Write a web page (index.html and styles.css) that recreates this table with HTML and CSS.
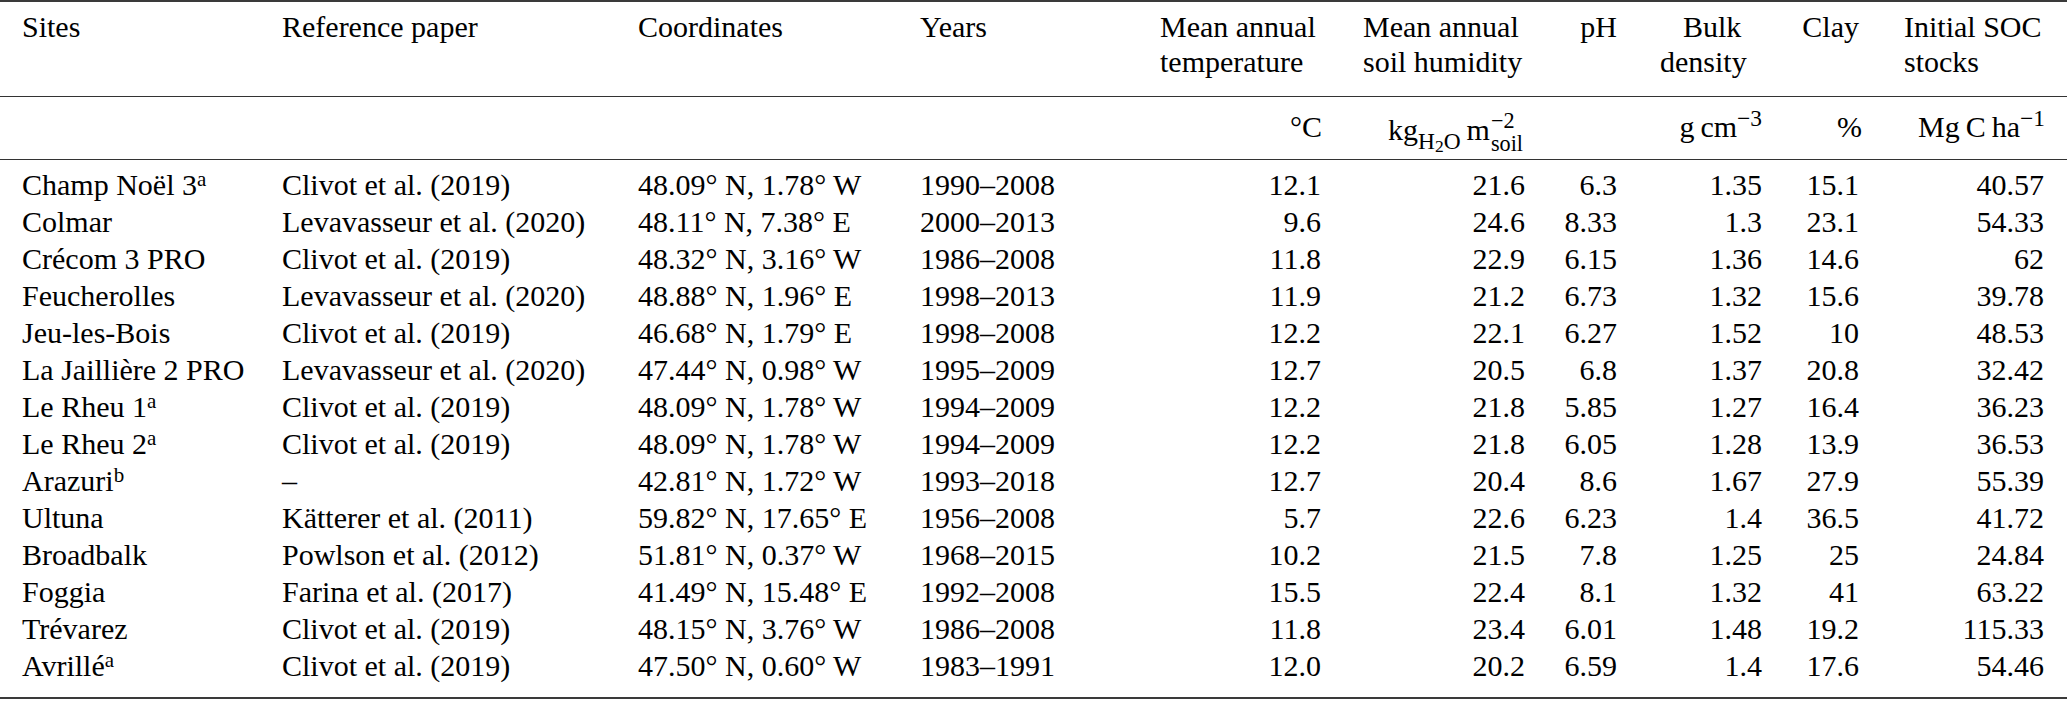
FILE: index.html
```html
<!DOCTYPE html>
<html lang="en">
<head>
<meta charset="utf-8">
<title>Sites table</title>
<link rel="stylesheet" href="styles.css">
</head>
<body>
<div class="tbl" role="table">
  <div class="row head" role="row">
    <div class="c">Sites</div>
    <div class="c">Reference paper</div>
    <div class="c">Coordinates</div>
    <div class="c">Years</div>
    <div class="c">Mean annual<br>temperature</div>
    <div class="c">Mean annual<br>soil humidity</div>
    <div class="c">pH</div>
    <div class="c"><span class="bulk">Bulk</span><br>density</div>
    <div class="c">Clay</div>
    <div class="c">Initial SOC<br>stocks</div>
  </div>
  <div class="row units" role="row">
    <div class="c"></div>
    <div class="c"></div>
    <div class="c"></div>
    <div class="c"></div>
    <div class="c">°C</div>
    <div class="c">kg<sub class="sb">H<sub class="sb2">2</sub>O</sub>&thinsp;m<span class="stack"><span>−2</span><span>soil</span></span></div>
    <div class="c"></div>
    <div class="c">g&thinsp;cm<sup class="sp">−3</sup></div>
    <div class="c">%</div>
    <div class="c">Mg&thinsp;C&thinsp;ha<sup class="sp">−1</sup></div>
  </div>
  <div class="body">
    <div class="row" role="row"><div class="c">Champ Noël 3<sup class="fn">a</sup></div><div class="c">Clivot et al. (2019)</div><div class="c">48.09° N, 1.78° W</div><div class="c">1990–2008</div><div class="c">12.1</div><div class="c">21.6</div><div class="c">6.3</div><div class="c">1.35</div><div class="c">15.1</div><div class="c">40.57</div></div>
    <div class="row" role="row"><div class="c">Colmar</div><div class="c">Levavasseur et al. (2020)</div><div class="c">48.11° N, 7.38° E</div><div class="c">2000–2013</div><div class="c">9.6</div><div class="c">24.6</div><div class="c">8.33</div><div class="c">1.3</div><div class="c">23.1</div><div class="c">54.33</div></div>
    <div class="row" role="row"><div class="c">Crécom 3 PRO</div><div class="c">Clivot et al. (2019)</div><div class="c">48.32° N, 3.16° W</div><div class="c">1986–2008</div><div class="c">11.8</div><div class="c">22.9</div><div class="c">6.15</div><div class="c">1.36</div><div class="c">14.6</div><div class="c">62</div></div>
    <div class="row" role="row"><div class="c">Feucherolles</div><div class="c">Levavasseur et al. (2020)</div><div class="c">48.88° N, 1.96° E</div><div class="c">1998–2013</div><div class="c">11.9</div><div class="c">21.2</div><div class="c">6.73</div><div class="c">1.32</div><div class="c">15.6</div><div class="c">39.78</div></div>
    <div class="row" role="row"><div class="c">Jeu-les-Bois</div><div class="c">Clivot et al. (2019)</div><div class="c">46.68° N, 1.79° E</div><div class="c">1998–2008</div><div class="c">12.2</div><div class="c">22.1</div><div class="c">6.27</div><div class="c">1.52</div><div class="c">10</div><div class="c">48.53</div></div>
    <div class="row" role="row"><div class="c">La Jaillière 2 PRO</div><div class="c">Levavasseur et al. (2020)</div><div class="c">47.44° N, 0.98° W</div><div class="c">1995–2009</div><div class="c">12.7</div><div class="c">20.5</div><div class="c">6.8</div><div class="c">1.37</div><div class="c">20.8</div><div class="c">32.42</div></div>
    <div class="row" role="row"><div class="c">Le Rheu 1<sup class="fn">a</sup></div><div class="c">Clivot et al. (2019)</div><div class="c">48.09° N, 1.78° W</div><div class="c">1994–2009</div><div class="c">12.2</div><div class="c">21.8</div><div class="c">5.85</div><div class="c">1.27</div><div class="c">16.4</div><div class="c">36.23</div></div>
    <div class="row" role="row"><div class="c">Le Rheu 2<sup class="fn">a</sup></div><div class="c">Clivot et al. (2019)</div><div class="c">48.09° N, 1.78° W</div><div class="c">1994–2009</div><div class="c">12.2</div><div class="c">21.8</div><div class="c">6.05</div><div class="c">1.28</div><div class="c">13.9</div><div class="c">36.53</div></div>
    <div class="row" role="row"><div class="c">Arazuri<sup class="fn">b</sup></div><div class="c">–</div><div class="c">42.81° N, 1.72° W</div><div class="c">1993–2018</div><div class="c">12.7</div><div class="c">20.4</div><div class="c">8.6</div><div class="c">1.67</div><div class="c">27.9</div><div class="c">55.39</div></div>
    <div class="row" role="row"><div class="c">Ultuna</div><div class="c">Kätterer et al. (2011)</div><div class="c">59.82° N, 17.65° E</div><div class="c">1956–2008</div><div class="c">5.7</div><div class="c">22.6</div><div class="c">6.23</div><div class="c">1.4</div><div class="c">36.5</div><div class="c">41.72</div></div>
    <div class="row" role="row"><div class="c">Broadbalk</div><div class="c">Powlson et al. (2012)</div><div class="c">51.81° N, 0.37° W</div><div class="c">1968–2015</div><div class="c">10.2</div><div class="c">21.5</div><div class="c">7.8</div><div class="c">1.25</div><div class="c">25</div><div class="c">24.84</div></div>
    <div class="row" role="row"><div class="c">Foggia</div><div class="c">Farina et al. (2017)</div><div class="c">41.49° N, 15.48° E</div><div class="c">1992–2008</div><div class="c">15.5</div><div class="c">22.4</div><div class="c">8.1</div><div class="c">1.32</div><div class="c">41</div><div class="c">63.22</div></div>
    <div class="row" role="row"><div class="c">Trévarez</div><div class="c">Clivot et al. (2019)</div><div class="c">48.15° N, 3.76° W</div><div class="c">1986–2008</div><div class="c">11.8</div><div class="c">23.4</div><div class="c">6.01</div><div class="c">1.48</div><div class="c">19.2</div><div class="c">115.33</div></div>
    <div class="row" role="row"><div class="c">Avrillé<sup class="fn">a</sup></div><div class="c">Clivot et al. (2019)</div><div class="c">47.50° N, 0.60° W</div><div class="c">1983–1991</div><div class="c">12.0</div><div class="c">20.2</div><div class="c">6.59</div><div class="c">1.4</div><div class="c">17.6</div><div class="c">54.46</div></div>
  </div>
</div>
</body>
</html>
```

FILE: styles.css
```css
html, body {
  margin: 0;
  padding: 0;
  background: #ffffff;
}

body {
  font-family: "Liberation Serif", "Times New Roman", serif;
  font-size: 30px;
  color: #000000;
}

.tbl {
  width: 2067px;
  border-top: 2px solid #3a3a3a;
  border-bottom: 2px solid #3a3a3a;
}

.row {
  display: grid;
  grid-template-columns: 282px 356px 282px 240px 203px 187px 90px 140px 100px 187px;
}

.c {
  white-space: nowrap;
}

.row > .c:first-child {
  padding-left: 22px;
}

/* header */
.head {
  line-height: 35px;
  padding: 7.4px 0 16.6px;
  border-bottom: 1px solid #333333;
}

.head > .c:nth-child(7) {
  text-align: right;
  padding-right: 23px;
}

.head > .c:nth-child(8) {
  padding-left: 20px;
}

.bulk {
  margin-left: 23px;
}

.head > .c:nth-child(9) {
  text-align: right;
  padding-right: 21px;
}

.head > .c:nth-child(10) {
  padding-left: 24px;
}

/* units */
.units {
  line-height: 36px;
  height: 50px;
  padding-top: 12px;
  border-bottom: 1px solid #333333;
}

.units > .c {
  text-align: right;
}

.units > .c:nth-child(5) { padding-right: 41px; }
.units > .c:nth-child(6) { padding-right: 27px; }
.units > .c:nth-child(8) { padding-right: 18px; }
.units > .c:nth-child(9) { padding-right: 18px; }
.units > .c:nth-child(10) { padding-right: 22px; }

.sb {
  font-size: 0.78em;
  line-height: 0;
  vertical-align: -9px;
}

.sb2 {
  font-size: 0.75em;
  line-height: 0;
  vertical-align: -3px;
}

.sp {
  font-size: 0.78em;
  line-height: 0;
  vertical-align: 11px;
}

.stack {
  display: inline-flex;
  flex-direction: column;
  align-items: flex-start;
  font-size: 0.74em;
  line-height: 23px;
  vertical-align: 12px;
  margin-left: 1px;
  margin-bottom: -12px;
}

/* body */
.body {
  padding: 6.4px 0 12.6px;
}

.body .row {
  line-height: 37px;
}

.body .row > .c:nth-child(n+5) {
  text-align: right;
}

.body .row > .c:nth-child(5) { padding-right: 42px; }
.body .row > .c:nth-child(6) { padding-right: 25px; }
.body .row > .c:nth-child(7) { padding-right: 23px; }
.body .row > .c:nth-child(8) { padding-right: 18px; }
.body .row > .c:nth-child(9) { padding-right: 21px; }
.body .row > .c:nth-child(10) { padding-right: 23px; }

.fn {
  font-size: 0.7em;
  line-height: 0;
  vertical-align: 9px;
}
```
